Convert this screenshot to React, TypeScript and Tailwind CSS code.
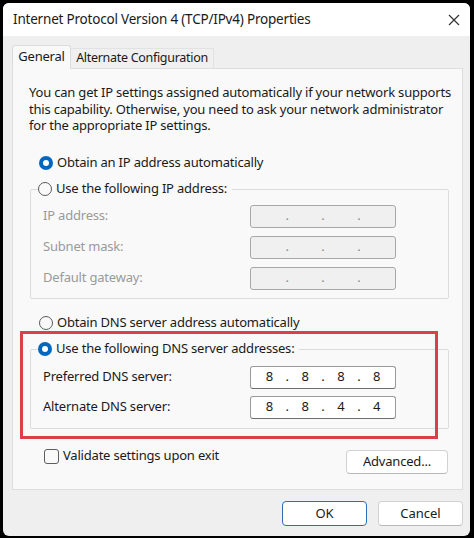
import React from "react";

const font = { fontFamily: '"Noto Sans", "Segoe UI", sans-serif' };

function Radio({ checked }: { checked: boolean }) {
  if (checked) {
    return (
      <span className="w-[14px] h-[14px] rounded-full bg-[#0067c0] flex items-center justify-center shrink-0">
        <span className="w-[6px] h-[6px] rounded-full bg-white" />
      </span>
    );
  }
  return <span className="w-[14px] h-[14px] rounded-full border border-[#5a5a5a] bg-[#f9f9f9] shrink-0" />;
}

function IpBox({ values, enabled }: { values: string[]; enabled: boolean }) {
  return (
    <div
      className={
        enabled
          ? "w-[146px] h-[23px] rounded-[3px] border border-[#9a9a9a] border-b-[#6e6e6e] bg-white grid grid-cols-[1fr_auto_1fr_auto_1fr_auto_1fr] items-center px-[2px] text-[13px] text-[#1a1a1a]"
          : "w-[146px] h-[23px] rounded-[3px] border border-[#a8a8a8] bg-[#f0f0f0] grid grid-cols-[1fr_auto_1fr_auto_1fr_auto_1fr] items-center px-[2px] text-[13px] text-[#8a8a8a]"
      }
    >
      <span className="text-center">{values[0]}</span>
      <span className="text-center">.</span>
      <span className="text-center">{values[1]}</span>
      <span className="text-center">.</span>
      <span className="text-center">{values[2]}</span>
      <span className="text-center">.</span>
      <span className="text-center">{values[3]}</span>
    </div>
  );
}

export default function App() {
  return (
    <div className="w-[474px] h-[538px] bg-black p-[3px] text-[#1a1a1a]" style={font}>
      <div className="w-[467px] h-[533px] bg-[#efefef] rounded-[6px] overflow-hidden flex flex-col">
        {/* Title bar */}
        <div className="h-[33px] bg-white flex items-center justify-between pl-[10px] pr-[9px] shrink-0">
          <span className="text-[13.5px] tracking-[-0.2px] whitespace-nowrap">Internet Protocol Version 4 (TCP/IPv4) Properties</span>
          <svg width="12" height="12" viewBox="0 0 12 12" className="mr-[1px]">
            <path d="M1 1 L11 11 M11 1 L1 11" stroke="#333" strokeWidth="1.2" fill="none" />
          </svg>
        </div>

        <div className="pl-[9px] pr-[7px] pt-[9px] flex flex-col">
          {/* Tabs */}
          <div className="flex items-end h-[23px] text-[13px] tracking-[-0.2px] relative z-10 whitespace-nowrap">
            <div className="h-[24px] w-[59px] shrink-0 bg-[#f9f9f9] border border-b-0 border-[#dcdcdc] rounded-t-[3px] flex items-center justify-center pb-[2px] mb-[-1px]">
              General
            </div>
            <div className="h-[20px] w-[143px] shrink-0 bg-[#f0f0f0] border border-b-0 border-l-0 border-[#e2e2e2] flex items-center justify-center text-[12.5px] tracking-[-0.3px]">
              Alternate Configuration
            </div>
          </div>

          {/* Panel */}
          <div className="h-[422px] bg-[#f9f9f9] border border-[#dedede] flex flex-col relative text-[13px] tracking-[-0.2px]">
            <p className="mt-[15px] ml-[16px] leading-[16.5px] whitespace-nowrap">
              You can get IP settings assigned automatically if your network supports
              <br />
              this capability. Otherwise, you need to ask your network administrator
              <br />
              for the appropriate IP settings.
            </p>

            <div className="mt-[21px] ml-[26px] h-[16px] flex items-center gap-[4px]">
              <Radio checked />
              <span>Obtain an IP address automatically</span>
            </div>

            {/* IP groupbox */}
            <div className="mt-[18px] ml-[17px] mr-[13px] border border-[#dcdcdc] rounded-[2px] pb-[8px]">
              <div className="-mt-[9px] ml-[7px] h-[16px] w-fit pr-[5px] bg-[#f9f9f9] flex items-center gap-[4px]">
                <Radio checked={false} />
                <span>Use the following IP address:</span>
              </div>
              <div className="mt-[8px] flex flex-col gap-[8px] text-[#9a9a9a]">
                {["IP address:", "Subnet mask:", "Default gateway:"].map((l) => (
                  <div key={l} className="flex items-center pl-[12px]">
                    <span className="w-[207px]">{l}</span>
                    <IpBox values={["", "", "", ""]} enabled={false} />
                  </div>
                ))}
              </div>
            </div>

            <div className="mt-[16px] ml-[26px] h-[16px] flex items-center gap-[4px]">
              <Radio checked={false} />
              <span>Obtain DNS server address automatically</span>
            </div>

            {/* DNS groupbox */}
            <div className="mt-[18px] ml-[17px] mr-[13px] border border-[#dcdcdc] rounded-[2px] pb-[9px]">
              <div className="-mt-[9px] ml-[7px] h-[16px] w-fit pr-[5px] bg-[#f9f9f9] flex items-center gap-[4px]">
                <Radio checked />
                <span>Use the following DNS server addresses:</span>
              </div>
              <div className="mt-[9px] flex flex-col gap-[7px]">
                <div className="flex items-center pl-[12px]">
                  <span className="w-[207px]">Preferred DNS server:</span>
                  <IpBox values={["8", "8", "8", "8"]} enabled />
                </div>
                <div className="flex items-center pl-[12px]">
                  <span className="w-[207px]">Alternate DNS server:</span>
                  <IpBox values={["8", "8", "4", "4"]} enabled />
                </div>
              </div>
            </div>

            {/* Validate + Advanced */}
            <div className="mt-[20px] ml-[31px] mr-[14px] flex items-start justify-between">
              <div className="flex items-center gap-[4px] h-[15px]">
                <span className="w-[15px] h-[15px] rounded-[3px] border border-[#5e5e5e] bg-[#f9f9f9]" />
                <span>Validate settings upon exit</span>
              </div>
              <button className="mt-[1px] w-[102px] h-[24px] rounded-[4px] border border-[#d2d2d2] border-b-[#b8b8b8] bg-white flex items-center justify-center">
                Advanced...
              </button>
            </div>

            {/* Red annotation box */}
            <div className="absolute left-[7px] top-[262px] w-[418px] h-[108px] border-[3px] border-[#dc3f47]" />
          </div>

          {/* Buttons */}
          <div className="mt-[11px] flex justify-end gap-[11px] text-[13px]">
            <button className="w-[85px] h-[25px] rounded-[4px] border border-[#2c6fb0] bg-white flex items-center justify-center">
              OK
            </button>
            <button className="w-[85px] h-[25px] rounded-[4px] border border-[#d2d2d2] border-b-[#b8b8b8] bg-white flex items-center justify-center">
              Cancel
            </button>
          </div>
        </div>
      </div>
    </div>
  );
}
